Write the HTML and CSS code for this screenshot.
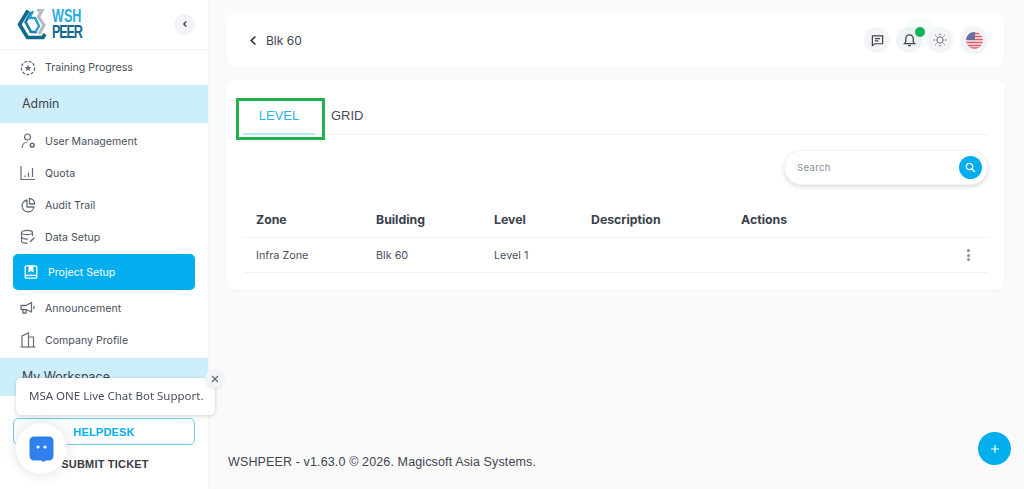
FILE: index.html
```html
<!DOCTYPE html>
<html lang="en">
<head>
<meta charset="utf-8">
<title>WSHPEER</title>
<link rel="stylesheet" href="styles.css">
</head>
<body>
<div class="app">
  <aside class="sidebar">
    <div class="brand">
      <svg class="logo" width="31" height="31" viewBox="0 0 31 31" fill="none">
        <path d="M11 1.5 L2.5 15.5 L10.5 28.5 H26 L28 25" stroke="#0f6a8c" stroke-width="3.6"/>
        <path d="M14 3 L8.5 13 L14 23 H20" stroke="#1b7ea5" stroke-width="2.6"/>
        <path d="M16 2 L12.5 9 H18 L22 17 L18.5 23" stroke="#2b9fcf" stroke-width="2.4"/>
        <path d="M20 1.5 H25 L21.5 8 L27 16 L22 25" stroke="#b6bcc2" stroke-width="3.2"/>
      </svg>
      <div class="wordmark"><span class="w1">WSH</span><span class="w2">PEER</span></div>
      <button class="collapse" type="button">
        <svg width="8" height="8" viewBox="0 0 8 8" fill="none"><path d="M5.2 1.5 L2.8 4 L5.2 6.5" stroke="#444" stroke-width="1.4"/></svg>
      </button>
    </div>
    <nav class="menu">
      <a class="item first">
        <svg class="ic" width="16" height="16" viewBox="0 0 16 16" fill="none"><circle cx="8" cy="8" r="6.6" stroke="#666c78" stroke-width="1.3" stroke-dasharray="3 1.5"/><path d="M8 4.6 L9 6.9 L11.4 7.1 L9.6 8.7 L10.1 11 L8 9.8 L5.9 11 L6.4 8.7 L4.6 7.1 L7 6.9 Z" fill="#666c78"/></svg>
        <span>Training Progress</span>
      </a>
      <div class="band">Admin</div>
      <a class="item">
        <svg class="ic" width="16" height="16" viewBox="0 0 16 16" fill="none" stroke="#666c78" stroke-width="1.2"><circle cx="7.5" cy="4" r="3"/><path d="M2 15 C2.5 11 4.5 9 7.5 9"/><circle cx="12.2" cy="12.2" r="1.9" stroke-width="1.5"/></svg>
        <span>User Management</span>
      </a>
      <a class="item">
        <svg class="ic" width="16" height="16" viewBox="0 0 16 16" fill="none" stroke="#666c78" stroke-width="1.2"><path d="M1 1 V14.5 H15"/><path d="M5 12 V10.5 M8.5 12 V7.5 M12.5 12 V3"/></svg>
        <span>Quota</span>
      </a>
      <a class="item">
        <svg class="ic" width="16" height="16" viewBox="0 0 16 16" fill="none" stroke="#666c78" stroke-width="1.3"><path d="M7 3 A6 6 0 1 0 14 10 H7 Z" stroke-linejoin="round"/><path d="M9.5 1.5 A5 5 0 0 1 14.5 7 H9.5 Z" stroke-linejoin="round"/></svg>
        <span>Audit Trail</span>
      </a>
      <a class="item">
        <svg class="ic" width="16" height="16" viewBox="0 0 16 16" fill="none" stroke="#666c78" stroke-width="1.2"><ellipse cx="7" cy="3.5" rx="5.5" ry="2.2"/><path d="M1.5 3.5 V12 C1.5 13.5 4 14.3 7.5 14.3"/><path d="M1.5 8 C2 9.5 5 10.2 8 10"/><path d="M12.5 3.5 V7"/><path d="M10 13 L14.5 8.5" stroke-width="1.5"/></svg>
        <span>Data Setup</span>
      </a>
      <a class="item active">
        <svg class="ic" width="14" height="14" viewBox="0 0 14 14" fill="none" stroke="#fff" stroke-width="1.3"><rect x="1.2" y="0.8" width="11.6" height="12.4" rx="1.2"/><path d="M1.2 10.4 H12.8"/><path d="M4.5 1 H9.5 V7.5 L7 6 L4.5 7.5 Z" fill="#fff" stroke="none"/></svg>
        <span>Project Setup</span>
      </a>
      <a class="item">
        <svg class="ic" width="16" height="16" viewBox="0 0 16 16" fill="none" stroke="#666c78" stroke-width="1.3"><path d="M1 5.5 H6 L11.5 2.5 V12 L6 9.5 H1 Z" stroke-linejoin="round"/><path d="M3 9.5 V13 H6 V9.5"/><path d="M14 6 V9"/></svg>
        <span>Announcement</span>
      </a>
      <a class="item">
        <svg class="ic" width="16" height="16" viewBox="0 0 16 16" fill="none" stroke="#666c78" stroke-width="1.2"><path d="M0.5 15 H15.5"/><path d="M2 15 V4 L8.5 1 V15"/><path d="M8.5 5 H13.5 V15"/></svg>
        <span>Company Profile</span>
      </a>
      <div class="band">My Workspace</div>
    </nav>
    <div class="side-foot">
      <button class="helpdesk" type="button">HELPDESK</button>
      <div class="ticket">SUBMIT TICKET</div>
    </div>
  </aside>

  <main class="main">
    <header class="topbar">
      <div class="crumb">
        <svg width="11" height="11" viewBox="0 0 11 11" fill="none"><path d="M7.4 1.5 L3.2 5.5 L7.4 9.5" stroke="#333" stroke-width="1.7"/></svg>
        <span>Blk 60</span>
      </div>
      <div class="tools">
        <span class="tool">
          <svg width="13" height="13" viewBox="0 0 14 14" fill="none" stroke="#444" stroke-width="1.3"><path d="M1.5 2 H12.5 V10.5 H4 L1.5 12.5 Z"/><path d="M4.2 5 H9.8 M4.2 7.5 H8"/></svg>
        </span>
        <span class="tool bell">
          <svg width="13" height="14" viewBox="0 0 14 15" fill="none" stroke="#444" stroke-width="1.4"><path d="M1.5 11.5 H12.5 L11 9.5 V6 A4 4 0 0 0 3 6 V9.5 Z"/><path d="M5.5 13.5 H8.5"/></svg>
          <i class="dot"></i>
        </span>
        <span class="tool sun">
          <svg width="14" height="14" viewBox="0 0 14 14" fill="none" stroke="#666" stroke-width="1"><circle cx="7" cy="7" r="3.2"/><path d="M7 0.5 V2.2 M7 11.8 V13.5 M0.5 7 H2.2 M11.8 7 H13.5 M2.4 2.4 L3.6 3.6 M10.4 10.4 L11.6 11.6 M2.4 11.6 L3.6 10.4 M10.4 3.6 L11.6 2.4"/></svg>
        </span>
        <span class="tool flag">
          <svg width="17" height="17" viewBox="0 0 17 17"><defs><clipPath id="fc"><circle cx="8.5" cy="8.5" r="8.5"/></clipPath></defs><g clip-path="url(#fc)"><rect width="17" height="17" fill="#f3eef0"/><path d="M0 1.5 H17 M0 4.5 H17 M0 7.5 H17 M0 10.5 H17 M0 13.5 H17 M0 16 H17" stroke="#dc5a66" stroke-width="1.5"/><rect width="9" height="8" fill="#6a6fa5"/></g></svg>
        </span>
      </div>
    </header>

    <section class="panel">
      <div class="tabs">
        <div class="tab current">LEVEL</div>
        <div class="tab">GRID</div>
        <div class="highlight"></div>
      </div>
      <div class="search-row">
        <div class="search">
          <span class="placeholder">Search</span>
          <span class="search-btn">
            <svg width="11" height="11" viewBox="0 0 11 11" fill="none" stroke="#fff" stroke-width="1.3"><circle cx="4.5" cy="4.5" r="3.2"/><path d="M7 7 L10 10"/></svg>
          </span>
        </div>
      </div>
      <div class="table">
        <div class="row head">
          <span class="c-zone">Zone</span><span class="c-build">Building</span><span class="c-level">Level</span><span class="c-desc">Description</span><span class="c-act">Actions</span>
        </div>
        <div class="row body">
          <span class="c-zone">Infra Zone</span><span class="c-build">Blk 60</span><span class="c-level">Level 1</span><span class="c-desc"></span><span class="c-act"></span>
          <span class="kebab"><i></i><i></i><i></i></span>
        </div>
      </div>
    </section>

    <footer class="copyright">WSHPEER - v1.63.0 © 2026. Magicsoft Asia Systems.</footer>
  </main>
</div>

<button class="fab" type="button">
  <svg width="10" height="10" viewBox="0 0 10 10" fill="none" stroke="#fff" stroke-width="1.2"><path d="M5 1 V9 M1 5 H9"/></svg>
</button>

<div class="bubble">MSA ONE Live Chat Bot Support.</div>
<span class="bubble-close">
  <svg width="8" height="8" viewBox="0 0 8 8" fill="none" stroke="#5f6470" stroke-width="1.1"><path d="M1 1 L7 7 M7 1 L1 7"/></svg>
</span>
<div class="chat">
  <svg width="25" height="26" viewBox="0 0 25 26"><path d="M5 0.5 H20 A4.5 4.5 0 0 1 24.5 5 V20 A4.5 4.5 0 0 1 20 24.5 H17 L14 26 L12.5 24.5 H5 A4.5 4.5 0 0 1 0.5 20 V5 A4.5 4.5 0 0 1 5 0.5 Z" fill="#2f80ed"/><circle cx="9" cy="11" r="1.6" fill="#fff"/><circle cx="16" cy="11" r="1.6" fill="#fff"/></svg>
</div>
</body>
</html>
```

FILE: styles.css
```css
* { box-sizing: border-box; }
html, body { margin: 0; height: 100%; overflow: hidden; }
body { font-family: Inter, "Liberation Sans", sans-serif; color: #3f4450; background: #fafafb; }

.app { display: flex; height: 489px; }

.sidebar {
  width: 208px; flex: none; height: 489px; background: #fff;
  display: flex; flex-direction: column; overflow: hidden;
  box-shadow: 1px 0 2px rgba(0,0,0,.03);
}
.brand {
  height: 50px; flex: none; display: flex; align-items: center;
  padding: 0 13px 1px 17px; border-bottom: 1px solid #f1f1f3;
}
.logo { flex: none; margin-right: 4px; }
.wordmark {
  display: flex; flex-direction: column; font-family: "Liberation Sans", sans-serif;
  font-weight: 700; font-size: 18px; line-height: 16px; transform: scaleX(.7); transform-origin: left center; width: 44px;
}
.w1 { color: #29abe2; height: 16px; }
.w2 { color: #0f6a8c; height: 16px; letter-spacing: -1.6px; }
.collapse {
  width: 21px; height: 21px; margin-left: auto; border: 0; border-radius: 50%; background: #f3f4f8;
  display: flex; align-items: center; justify-content: center; padding: 0;
}

.menu { display: flex; flex-direction: column; height: 345px; flex: none; }
.item {
  height: 32px; flex: none; display: flex; align-items: center; gap: 9px; padding-left: 20px;
  font-size: 10.6px; color: #4a4f5c; white-space: nowrap;
}
.item.first { height: 35px; }
.ic { flex: none; }
.band {
  height: 38px; flex: none; background: #cdeefb; padding: 0 0 1px 22px; display: flex; align-items: center;
  font-size: 12.4px; color: #3f4450; margin-bottom: 2px;
}
.band:last-child { margin-top: 2px; }
.item.active {
  height: 36px; margin: 1px 13px 2px; padding-left: 11px; gap: 10px; background: #03aeef; color: #fff; border-radius: 5px;
}

.side-foot { flex: none; display: flex; flex-direction: column; align-items: center; padding-top: 23px; }
.helpdesk {
  width: 182px; height: 27px; flex: none; border: 1px solid #6fcdf2; border-radius: 5px; background: #fff;
  font: 700 11px "Liberation Sans", sans-serif; color: #03aeef; letter-spacing: .2px;
}
.ticket { margin-top: 12px; font: 700 11px/14px "Liberation Sans", sans-serif; color: #3a3a44; padding-left: 2px; letter-spacing: .2px; }

.main { flex: 1; min-width: 0; padding: 13px 20px 0 19px; display: flex; flex-direction: column; }
.topbar {
  height: 54px; flex: none; background: #fff; border-radius: 8px; display: flex; align-items: center;
  justify-content: space-between; padding: 0 16px 0 21px; box-shadow: 0 1px 2px rgba(0,0,0,.03);
}
.crumb { display: flex; align-items: center; gap: 7px; font-size: 12px; color: #3f4450; }
.tools { display: flex; align-items: center; }
.tool {
  position: relative; width: 26px; height: 26px; border-radius: 50%; background: #f3f4f8;
  display: flex; align-items: center; justify-content: center;
}
.tool.bell { margin-left: 6px; }
.tool.sun { margin-left: 5px; }
.tool.flag { width: 28px; height: 28px; margin-left: 7px; }
.dot { position: absolute; top: 0; right: -3px; width: 10px; height: 10px; border-radius: 50%; background: #0fb35a; box-shadow: 0 0 0 10px rgba(15,179,90,.04); }

.panel { margin-top: 13px; height: 210px; flex: none; background: #fff; border-radius: 8px; padding: 0 16px 0 17px; box-shadow: 0 1px 2px rgba(0,0,0,.03); }
.tabs { position: relative; height: 55px; display: flex; border-bottom: 1px solid #f1f1f3; }
.tab { font: 13px "Liberation Sans", sans-serif; color: #4a4a55; padding-top: 28px; }
.tab.current { width: 72px; margin-left: -1px; margin-right: 16px; text-align: center; color: #29b3ee; border-bottom: 2px solid #b5e6fa; height: 55px; }
.highlight { position: absolute; left: -8px; top: 18px; width: 89px; height: 42px; border: 3px solid #22b14c; pointer-events: none; }

.search-row { display: flex; justify-content: flex-end; padding-top: 15px; }
.search {
  width: 204px; height: 35px; border-radius: 18px; background: #fff; border: 1px solid #f4f4f6;
  box-shadow: 0 2px 4px rgba(0,0,0,.14); display: flex; align-items: center; justify-content: space-between; padding: 0 5px 0 12px;
}
.placeholder { font-size: 9.6px; color: #8a8f9a; letter-spacing: .3px; }
.search-btn { width: 23px; height: 23px; border-radius: 50%; background: #03aeef; display: flex; align-items: center; justify-content: center; }

.table { margin-top: 17px; }
.row { position: relative; display: flex; align-items: center; font-size: 10.8px; color: #4a4f5c; padding-left: 12px; border-bottom: 1px solid #f3f3f5; }
.row.head { height: 36px; font-weight: 700; font-size: 12.3px; color: #3a3f4b; }
.row.body { height: 35px; }
.c-zone { width: 120px; }
.c-build { width: 118px; }
.c-level { width: 97px; }
.c-desc { width: 150px; }
.kebab { position: absolute; right: 18px; top: 11px; display: flex; flex-direction: column; gap: 1.5px; }
.kebab i { width: 3px; height: 3px; border-radius: 50%; background: #8a8a9a; }

.copyright { margin-top: auto; margin-bottom: 20px; margin-left: 1px; font: 12.5px/14px "Liberation Sans", sans-serif; color: #3f4450; letter-spacing: .13px; }

.fab {
  position: fixed; left: 978px; top: 432px; width: 33px; height: 33px; border: 0; border-radius: 50%; background: #03aeef;
  display: flex; align-items: center; justify-content: center; padding: 0;
}
.bubble {
  position: fixed; left: 16px; top: 378px; width: 199px; height: 37px; background: #fff; border-radius: 5px;
  box-shadow: 0 1px 4px rgba(0,0,0,.18); font: 11.5px/36px "Noto Sans", "Open Sans", sans-serif; color: #4a4f5c; padding-left: 13px; white-space: nowrap;
}
.bubble-close {
  position: fixed; left: 205px; top: 369px; width: 19px; height: 19px; border-radius: 50%; background: #f3f4f8;
  box-shadow: 0 1px 3px rgba(0,0,0,.1);
  display: flex; align-items: center; justify-content: center;
}
.chat {
  position: fixed; left: 16px; top: 423px; width: 51px; height: 51px; border-radius: 50%; background: #fff;
  box-shadow: 0 0 14px rgba(0,0,0,.13); display: flex; align-items: center; justify-content: center;
}
```
